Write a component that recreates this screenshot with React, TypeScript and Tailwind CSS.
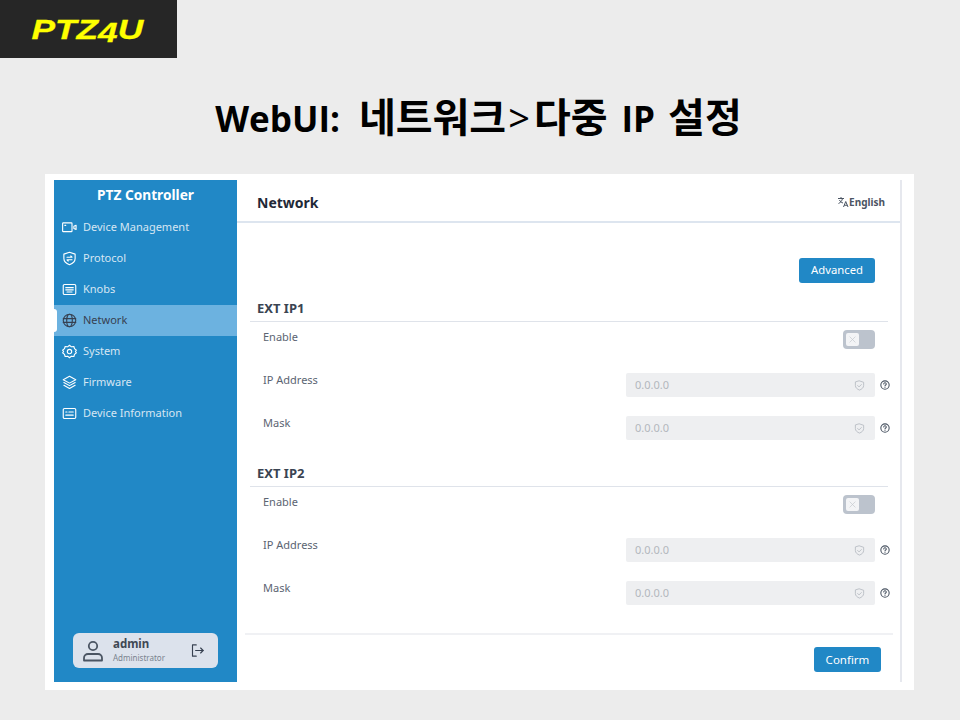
import React from "react";

const I = ({ children, cls = "" }: { children: React.ReactNode; cls?: string }) => (
  <svg viewBox="0 0 24 24" fill="none" stroke="currentColor" strokeWidth="1.800" strokeLinecap="round" strokeLinejoin="round" className={cls}>{children}</svg>
);

const nav: { label: string; active?: boolean; icon: React.ReactNode }[] = [
  { label: "Device Management", icon: <><rect x="1" y="4.500" width="15" height="14" rx="1" /><path d="M4.500 8.500h1.500" /><path d="M19 10l3.500-1.500v6.500L19 13.500z" /></> },
  { label: "Protocol", icon: <><path d="M12 2l9 3v7c0 5-4 8-9 10-5-2-9-5-9-10V5z" /><path d="M8 10h8l-2-2" /><path d="M16 14H8l2 2" /></> },
  { label: "Knobs", icon: <><rect x="2" y="4" width="20" height="16" rx="2" /><path d="M6 9h12M6 12.500h12M8 16h8" /></> },
  { label: "Network", active: true, icon: <><circle cx="12" cy="12" r="10" /><path d="M2 9h20M2 15h20" /><ellipse cx="12" cy="12" rx="4.500" ry="10" /></> },
  { label: "System", icon: <><path d="M12 2l3 2.500 4-.5 1 3.500 3 2.500-1.500 2 1.500 2-3 2.500-1 3.500-4-.5-3 2.500-3-2.500-4 .5-1-3.500-3-2.500 1.500-2-1.500-2 3-2.500 1-3.500 4 .5z" /><circle cx="12" cy="12" r="3.500" /></> },
  { label: "Firmware", icon: <><path d="M12 2l10 5.500-10 5.500L2 7.500z" /><path d="M3 12l9 5 9-5" /><path d="M3 16.500l9 5 9-5" /></> },
  { label: "Device Information", icon: <><rect x="2" y="4" width="20" height="16" rx="2" /><path d="M6 9.500h2M11 9.500h7M6 14.500h12" /></> },
];

function Shield() {
  return (
    <I cls="w-[11px] h-[11px] text-[#b4b9c0]">
      <path d="M12 2l9 3v7c0 5-4 8-9 10-5-2-9-5-9-10V5z" />
      <path d="M8 12l3 3 5-5" />
    </I>
  );
}

function Help() {
  return (
    <I cls="w-[10px] h-[10px] text-[#4b5563] shrink-0">
      <circle cx="12" cy="12" r="10" strokeWidth="2.600" />
      <path d="M9 9.500a3 3 0 1 1 4.500 2.600c-1 .6-1.500 1.200-1.500 2.400" strokeWidth="2.600" />
      <path d="M12 18v.01" strokeWidth="2.600" />
    </I>
  );
}

function IpField({ label }: { label: string }) {
  return (
    <div className="flex items-start h-[43px] pl-[13px]">
      <span className="text-[11px] leading-[16px] text-[#5b6472] mt-[-1px]">{label}</span>
      <div className="ml-auto flex items-center w-[249px] h-[24px] rounded-[2px] bg-[#eeeff1] pl-[9px] pr-[10px] justify-between">
        <span className="text-[11px] text-[#b3b7bd]">0.0.0.0</span>
        <Shield />
      </div>
      <div className="w-[15px] h-[24px] flex items-center justify-end mr-[-2px]">
        <Help />
      </div>
    </div>
  );
}

function Section({ title }: { title: string }) {
  return (
    <div>
      <div className="pl-[7px] text-[13px] leading-[18px] font-bold text-[#3a4452] h-[22px]">{title}</div>
      <div className="border-t border-[#dfe3ea] h-[9px]" />
      <div className="flex items-start h-[43px] pl-[13px]">
        <span className="text-[11px] leading-[16px] text-[#5b6472] mt-[-1px]">Enable</span>
        <div className="ml-auto mr-[13px] w-[32px] h-[19px] rounded-[4px] bg-[#bcc3cd] p-[3px]">
          <div className="w-[13px] h-[13px] rounded-[2px] bg-[#f3f4f6] flex items-center justify-center text-[#c4c8ce]">
            <I cls="w-[9px] h-[9px]"><path d="M5 5l14 14M19 5L5 19" /></I>
          </div>
        </div>
      </div>
      <IpField label="IP Address" />
      <IpField label="Mask" />
    </div>
  );
}

export default function App() {
  return (
    <div className="w-[960px] h-[720px] bg-[#ececec] overflow-hidden font-['Noto_Sans',sans-serif]">
      <div className="w-[177px] h-[58px] bg-[#262626] flex items-center justify-center">
        <span className="font-['Liberation_Sans',sans-serif] font-bold italic text-[28px] text-[#ffff00] mt-[1px] mr-[2px] scale-x-[1.26] [-webkit-text-stroke:0.3px_#ffff00]">
          PTZ<span className="relative top-[3px]">4</span>U
        </span>
      </div>
      <div className="h-[116px] flex justify-center pt-[30px] pr-[3px]">
        <h1 className="font-['Open_Sans','Noto_Sans_CJK_KR',sans-serif] text-[35px] leading-[54px] font-bold text-black whitespace-nowrap flex items-baseline">
          <span>WebUI:</span>
          <span className="ml-[19px] text-[40px] font-['Noto_Sans_CJK_KR',sans-serif]">네트워크</span>
          <span className="ml-[2px] font-normal text-[38px] font-['Noto_Sans',sans-serif]">{">"}</span>
          <span className="ml-[4px] text-[40px] font-['Noto_Sans_CJK_KR',sans-serif]">다중</span>
          <span className="ml-[14px]">IP</span>
          <span className="ml-[13px] text-[40px] font-['Noto_Sans_CJK_KR',sans-serif]">설정</span>
        </h1>
      </div>
      <div className="ml-[45px] w-[869px] h-[516px] bg-white flex pt-[6px] pb-[8px] pl-[9px] pr-[12px]">
        <aside className="w-[183px] bg-[#2188c6] flex flex-col shrink-0">
          <div className="h-[30px] flex items-center justify-center text-[13.7px] font-bold text-white">PTZ Controller</div>
          <nav className="flex flex-col mt-[2px]">
            {nav.map((n) =>
              n.active ? (
                <div key={n.label} className="relative flex items-center h-[31px] bg-[#6cb2e0] pl-[8px] gap-[6px] text-[#374151]">
                  <span className="absolute left-0 top-0 w-[3px] h-[23px] mt-[4px] bg-white rounded-r-[3px]" />
                  <I cls="w-[15px] h-[15px] shrink-0">{n.icon}</I>
                  <span className="text-[11px]">{n.label}</span>
                </div>
              ) : (
                <div key={n.label} className="flex items-center h-[31px] pl-[8px] gap-[6px] text-[#d6e6f3]">
                  <I cls="w-[15px] h-[15px] shrink-0 text-white">{n.icon}</I>
                  <span className="text-[11px]">{n.label}</span>
                </div>
              )
            )}
          </nav>
          <div className="mt-auto mx-[19px] mb-[14px] h-[35px] rounded-[6px] bg-[#dce2ec] flex items-center pl-[8px] pr-[13px]">
            <I cls="w-[24px] h-[24px] text-[#4b5563] shrink-0"><circle cx="12" cy="7" r="4.200" /><path d="M3 21.500v-2.500a4 4 0 0 1 4-4h10a4 4 0 0 1 4 4v2.500z" /></I>
            <div className="ml-[8px] flex flex-col">
              <span className="text-[11.5px] leading-[14px] font-bold text-[#3f4854]">admin</span>
              <span className="text-[8px] leading-[13px] text-[#7a828e]">Administrator</span>
            </div>
            <I cls="w-[15px] h-[15px] text-[#374151] ml-auto"><path d="M10 3H4v18h6" /><path d="M9 12h12" /><path d="M17 8l4 4-4 4" /></I>
          </div>
        </aside>
        <main className="flex-1 min-w-0 border-r-2 border-[#e6e8ee] flex flex-col">
          <header className="h-[43px] shrink-0 border-b-2 border-[#dde5ef] flex items-center pl-[20px] pr-[15px] pt-[3px]">
            <span className="text-[14px] font-bold text-[#1f2937]">Network</span>
            <span className="ml-auto flex items-center text-[10px] font-bold text-[#4b5563]">
              <svg viewBox="0 0 24 24" fill="none" stroke="currentColor" strokeWidth="2" className="w-[12px] h-[12px] mr-[-1px]"><path d="M2 5h12M8 2v3M11 5c-1 5-4 8-8 10M5 8c1 3 4 5 7 6" /><path d="M13 22l4.500-11L22 22M14.500 18.500h6" /></svg>
              <span className="ml-[1px]">English</span>
            </span>
          </header>
          <div className="flex-1 flex flex-col pl-[13px] pr-[12px] min-h-0 overflow-hidden">
            <div className="flex justify-end pr-[13px] pt-[35px] h-[76px] shrink-0">
              <button className="w-[76px] h-[25px] rounded-[3px] bg-[#2188c6] text-white text-[11.3px]">Advanced</button>
            </div>
            <div className="flex flex-col gap-[5px]">
              <Section title="EXT IP1" />
              <Section title="EXT IP2" />
            </div>
          </div>
          <footer className="h-[49px] shrink-0 ml-[8px] mr-[7px] border-t-2 border-[#f0f1f4] flex items-start justify-end pt-[12px] pr-[12px]">
            <button className="w-[67px] h-[25px] rounded-[3px] bg-[#2188c6] text-white text-[11.5px]">Confirm</button>
          </footer>
        </main>
      </div>
    </div>
  );
}
